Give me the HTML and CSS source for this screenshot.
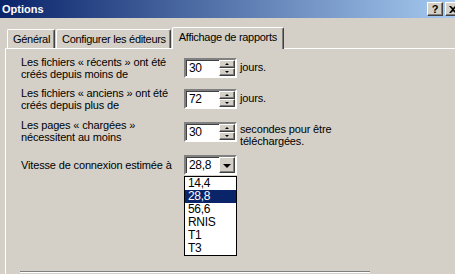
FILE: index.html
```html
<!DOCTYPE html>
<html lang="fr">
<head>
    <meta charset="UTF-8">
    <title>Options</title>
    <link rel="stylesheet" href="styles.css">
</head>
<body>
    <div class="window">
        <div class="titlebar">
            <span class="title">Options</span>
            <div class="title-buttons">
                <span class="tbtn">?</span>
                <span class="tbtn">
                    <svg width="8" height="7" viewBox="0 0 8 7"><path d="M0 0h2l2 2 2-2h2L5 3.5 8 7H6L4 5 2 7H0l3-3.5z" fill="#000"/></svg>
                </span>
            </div>
        </div>

        <div class="tabs">
            <div class="tab">Général</div>
            <div class="tab">Configurer les éditeurs</div>
            <div class="tab active">Affichage de rapports</div>
        </div>

        <div class="panel">
            <div class="row row-1">
                <div class="label">Les fichiers « récents » ont été<br>créés depuis moins de</div>
                <div class="spinner">
                    <span class="value">30</span>
                    <div class="spin-btns">
                        <span class="spin-btn"><i class="up"></i></span>
                        <span class="spin-btn"><i class="down"></i></span>
                    </div>
                </div>
                <div class="unit">jours.</div>
            </div>
            <div class="row row-2">
                <div class="label">Les fichiers « anciens » ont été<br>créés depuis plus de</div>
                <div class="spinner">
                    <span class="value">72</span>
                    <div class="spin-btns">
                        <span class="spin-btn"><i class="up"></i></span>
                        <span class="spin-btn"><i class="down"></i></span>
                    </div>
                </div>
                <div class="unit">jours.</div>
            </div>
            <div class="row row-3">
                <div class="label">Les pages « chargées »<br>nécessitent au moins</div>
                <div class="spinner spinner-low">
                    <span class="value">30</span>
                    <div class="spin-btns">
                        <span class="spin-btn"><i class="up"></i></span>
                        <span class="spin-btn"><i class="down"></i></span>
                    </div>
                </div>
                <div class="unit">secondes pour être<br>téléchargées.</div>
            </div>
            <div class="row row-speed">
                <div class="label">Vitesse de connexion estimée à</div>
                <div class="combo">
                    <span class="value">28,8</span>
                    <span class="combo-btn"><i class="down-big"></i></span>
                    <ul class="dropdown">
                        <li>14,4</li>
                        <li class="selected">28,8</li>
                        <li>56,6</li>
                        <li>RNIS</li>
                        <li>T1</li>
                        <li>T3</li>
                    </ul>
                </div>
            </div>
            <div class="group"></div>
        </div>
    </div>
</body>
</html>
```

FILE: styles.css
```css
body {
    margin: 0;
    background-color: #d4d0c8;
    font-family: "Liberation Sans", Arial, sans-serif;
    font-size: 11px;
    letter-spacing: -0.15px;
    color: #000;
    overflow: hidden;
}
.window {
    width: 455px;
    height: 274px;
    overflow: hidden;
}
.titlebar {
    height: 18px;
    display: flex;
    align-items: center;
    justify-content: space-between;
    background: linear-gradient(to right, #0a246a, #a6caf0);
}
.title {
    color: #fff;
    font-weight: bold;
    padding-left: 2px;
    letter-spacing: 0;
}
.title-buttons {
    display: flex;
    gap: 2px;
    margin-right: -6px;
}
.tbtn {
    width: 14px;
    height: 12px;
    display: flex;
    align-items: center;
    justify-content: center;
    background-color: #d4d0c8;
    border: 1px solid;
    border-color: #fff #404040 #404040 #fff;
    box-shadow: inset -1px -1px #808080;
    font-weight: bold;
    font-size: 11px;
    line-height: 12px;
}
.tabs {
    display: flex;
    align-items: flex-end;
    height: 21px;
    margin-top: 9px;
    padding-left: 7px;
}
.tab {
    height: 18px;
    line-height: 18px;
    padding: 0 4px 0 5px;
    letter-spacing: -0.3px;
    border-top: 1px solid #fff;
    border-left: 1px solid #fff;
    border-right: 1px solid #404040;
    box-shadow: inset -1px 0 #808080;
    border-radius: 2px 2px 0 0;
    margin-right: 1px;
}
.tab.active {
    height: 21px;
    line-height: 19px;
    padding: 0 6px 0 6px;
    margin-bottom: -1px;
    position: relative;
    background-color: #d4d0c8;
    z-index: 1;
}
.panel {
    margin-left: 5px;
    border-top: 1px solid #fff;
    border-left: 1px solid #fff;
    padding: 7px 0 0 15px;
    height: 300px;
}
.row {
    display: flex;
    align-items: flex-start;
}
.row-1 { height: 31px; }
.row-2 { height: 32px; }
.row-3 { height: 36px; }
.row-speed { align-items: center; }
.label {
    width: 163px;
    line-height: 12px;
}
.spinner,
.combo {
    width: 49px;
    height: 16px;
    margin-top: 2px;
    display: flex;
    align-items: stretch;
    background-color: #fff;
    border: 2px solid;
    border-color: #808080 #fff #fff #808080;
    box-shadow: inset 1px 1px #404040;
}
.spinner-low { margin-top: 3px; }
.value {
    flex: 1;
    padding-left: 3px;
    padding-top: 1px;
    line-height: 14px;
    font-size: 12px;
    letter-spacing: -0.3px;
}
.spin-btns {
    width: 16px;
    display: flex;
    flex-direction: column;
}
.spin-btn,
.combo-btn {
    flex: 1;
    display: flex;
    align-items: center;
    justify-content: center;
    background-color: #d4d0c8;
    border: 1px solid;
    border-color: #fff #404040 #404040 #fff;
    box-shadow: inset -1px -1px #808080;
}
.up {
    border-left: 2px solid transparent;
    border-right: 2px solid transparent;
    border-bottom: 2px solid #000;
    margin-bottom: 1px;
}
.down {
    border-left: 2px solid transparent;
    border-right: 2px solid transparent;
    border-top: 2px solid #000;
    margin-bottom: 1px;
}
.unit {
    margin-left: 3px;
    margin-top: 5px;
    line-height: 12px;
}
.row-3 .unit { margin-top: 4px; }
.combo {
    position: relative;
    margin-top: 0;
}
.combo-btn {
    flex: none;
    width: 14px;
}
.down-big {
    border-left: 4px solid transparent;
    border-right: 4px solid transparent;
    border-top: 4px solid #000;
    margin-top: 1px;
}
.dropdown {
    position: absolute;
    top: 19px;
    left: -2px;
    width: 51px;
    margin: 0;
    padding: 0;
    list-style: none;
    background-color: #fff;
    border: 1px solid #000;
    z-index: 2;
}
.dropdown li {
    height: 13px;
    line-height: 13px;
    padding-left: 3px;
    font-size: 12px;
    letter-spacing: -0.3px;
}
.dropdown li.selected {
    background-color: #0a246a;
    color: #fff;
}
.group {
    width: 350px;
    margin-left: -1px;
    margin-top: 96px;
    border-top: 1px solid #808080;
    border-bottom: 1px solid #fff;
}
```
